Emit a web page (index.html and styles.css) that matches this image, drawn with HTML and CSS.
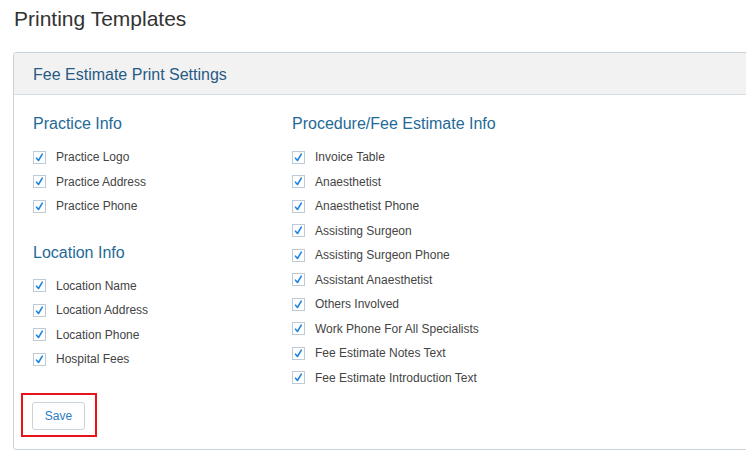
FILE: index.html
```html
<!DOCTYPE html>
<html>
<head>
<meta charset="utf-8">
<link rel="stylesheet" href="styles.css">
</head>
<body>
<div class="page">
  <h1 class="title">Printing Templates</h1>
  <div class="panel">
    <div class="panel-header">Fee Estimate Print Settings</div>
    <div class="panel-body">
      <div class="columns">
        <div class="col col-left">
          <h3 class="section">Practice Info</h3>
          <ul class="checks">
            <li class="check"><span class="box"><svg viewBox="0 0 13 13"><path d="M3 7.3 L5.3 10 L9.8 2.5"/></svg></span>Practice Logo</li>
            <li class="check"><span class="box"><svg viewBox="0 0 13 13"><path d="M3 7.3 L5.3 10 L9.8 2.5"/></svg></span>Practice Address</li>
            <li class="check"><span class="box"><svg viewBox="0 0 13 13"><path d="M3 7.3 L5.3 10 L9.8 2.5"/></svg></span>Practice Phone</li>
          </ul>
          <h3 class="section section-gap">Location Info</h3>
          <ul class="checks">
            <li class="check"><span class="box"><svg viewBox="0 0 13 13"><path d="M3 7.3 L5.3 10 L9.8 2.5"/></svg></span>Location Name</li>
            <li class="check"><span class="box"><svg viewBox="0 0 13 13"><path d="M3 7.3 L5.3 10 L9.8 2.5"/></svg></span>Location Address</li>
            <li class="check"><span class="box"><svg viewBox="0 0 13 13"><path d="M3 7.3 L5.3 10 L9.8 2.5"/></svg></span>Location Phone</li>
            <li class="check"><span class="box"><svg viewBox="0 0 13 13"><path d="M3 7.3 L5.3 10 L9.8 2.5"/></svg></span>Hospital Fees</li>
          </ul>
        </div>
        <div class="col col-right">
          <h3 class="section">Procedure/Fee Estimate Info</h3>
          <ul class="checks">
            <li class="check"><span class="box"><svg viewBox="0 0 13 13"><path d="M3 7.3 L5.3 10 L9.8 2.5"/></svg></span>Invoice Table</li>
            <li class="check"><span class="box"><svg viewBox="0 0 13 13"><path d="M3 7.3 L5.3 10 L9.8 2.5"/></svg></span>Anaesthetist</li>
            <li class="check"><span class="box"><svg viewBox="0 0 13 13"><path d="M3 7.3 L5.3 10 L9.8 2.5"/></svg></span>Anaesthetist Phone</li>
            <li class="check"><span class="box"><svg viewBox="0 0 13 13"><path d="M3 7.3 L5.3 10 L9.8 2.5"/></svg></span>Assisting Surgeon</li>
            <li class="check"><span class="box"><svg viewBox="0 0 13 13"><path d="M3 7.3 L5.3 10 L9.8 2.5"/></svg></span>Assisting Surgeon Phone</li>
            <li class="check"><span class="box"><svg viewBox="0 0 13 13"><path d="M3 7.3 L5.3 10 L9.8 2.5"/></svg></span>Assistant Anaesthetist</li>
            <li class="check"><span class="box"><svg viewBox="0 0 13 13"><path d="M3 7.3 L5.3 10 L9.8 2.5"/></svg></span>Others Involved</li>
            <li class="check"><span class="box"><svg viewBox="0 0 13 13"><path d="M3 7.3 L5.3 10 L9.8 2.5"/></svg></span>Work Phone For All Specialists</li>
            <li class="check"><span class="box"><svg viewBox="0 0 13 13"><path d="M3 7.3 L5.3 10 L9.8 2.5"/></svg></span>Fee Estimate Notes Text</li>
            <li class="check"><span class="box"><svg viewBox="0 0 13 13"><path d="M3 7.3 L5.3 10 L9.8 2.5"/></svg></span>Fee Estimate Introduction Text</li>
          </ul>
        </div>
      </div>
      <div class="actions">
        <button class="btn-save" type="button">Save</button>
        <span class="highlight"></span>
      </div>
    </div>
  </div>
</div>
</body>
</html>
```

FILE: styles.css
```css
html, body {
  margin: 0;
  padding: 0;
  background: #ffffff;
}
body {
  font-family: "Liberation Sans", Arial, sans-serif;
  color: #333333;
}
.page {
  width: 746px;
  height: 459px;
  overflow: hidden;
  padding: 0 0 0 13px;
  box-sizing: border-box;
}
.title {
  margin: 0;
  padding: 7px 0 0 1px;
  height: 52px;
  box-sizing: border-box;
  font-size: 21px;
  font-weight: normal;
  line-height: 24px;
  color: #333333;
}
.panel {
  width: 760px;
  border: 1px solid #cad3db;
  border-radius: 3px;
  background: #ffffff;
}
.panel-header {
  height: 42px;
  box-sizing: border-box;
  padding: 12px 0 0 19px;
  background: #f2f2f2;
  border-bottom: 1px solid #d5dde4;
  border-radius: 3px 0 0 0;
  font-size: 16px;
  line-height: 20px;
  color: #275a85;
}
.panel-body {
  padding: 19px 0 19px 19px;
}
.columns {
  display: flex;
}
.col-left {
  width: 259px;
}
.col-right {
  flex: 1;
}
.section {
  margin: 0 0 11px 0;
  font-size: 16px;
  font-weight: normal;
  line-height: 20px;
  color: #1f6a98;
}
.section-gap {
  margin-top: 24px;
}
.checks {
  list-style: none;
  margin: 0;
  padding: 0;
}
.check {
  display: flex;
  align-items: center;
  height: 24.5px;
  font-size: 12px;
  color: #444444;
}
.box {
  width: 13px;
  height: 13px;
  box-sizing: border-box;
  border: 1px solid #bfcad5;
  background: #ffffff;
  margin-right: 10px;
  display: inline-flex;
}
.box svg {
  width: 11px;
  height: 11px;
}
.box path {
  fill: none;
  stroke: #1e86e0;
  stroke-width: 1.9;
  stroke-linecap: round;
  stroke-linejoin: round;
}
.actions {
  position: relative;
  margin-top: 12px;
  height: 28px;
}
.btn-save {
  width: 53px;
  height: 28px;
  margin-left: -1px;
  padding: 0;
  border: 1px solid #c9d3dc;
  border-radius: 3px;
  background: #ffffff;
  font-family: "Liberation Sans", Arial, sans-serif;
  font-size: 12px;
  color: #2a7dc6;
}
.highlight {
  position: absolute;
  left: -12px;
  top: -9px;
  width: 76px;
  height: 44px;
  box-sizing: border-box;
  border: 2px solid #e8141a;
}
```
